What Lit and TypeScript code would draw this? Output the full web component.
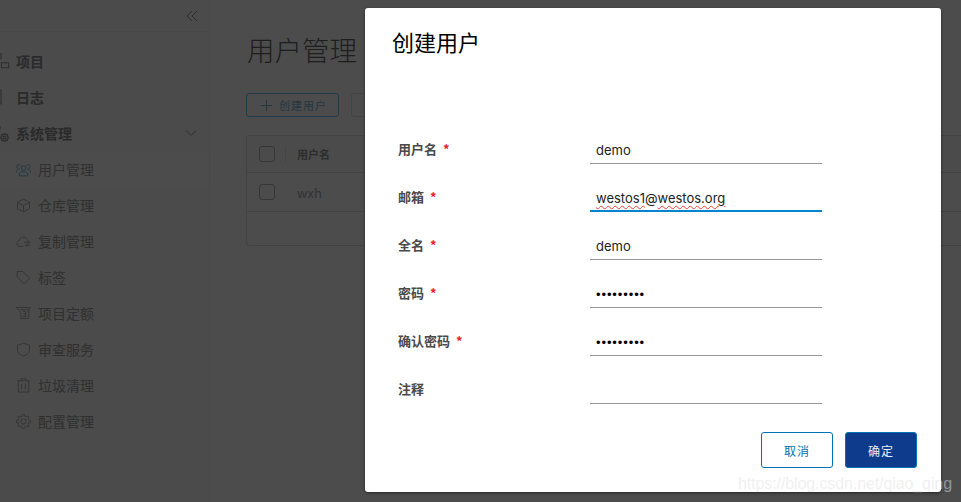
import { LitElement, html, css, svg } from "lit";
import { customElement } from "lit/decorators.js";

function gearPath(cx: number, cy: number, outer: number, inner: number, teeth: number) {
  const pts: string[] = [];
  const step = (Math.PI * 2) / teeth;
  for (let i = 0; i < teeth; i++) {
    const a = i * step - Math.PI / 2;
    const at = (r: number, o: number) =>
      `${(cx + r * Math.cos(a + o * step)).toFixed(2)} ${(cy + r * Math.sin(a + o * step)).toFixed(2)}`;
    pts.push(at(outer, -0.16), at(outer, 0.16), at(inner, 0.3), at(inner, 0.7));
  }
  return `M${pts.join("L")}Z`;
}

const icons: Record<string, unknown> = {
  project: svg`<rect x="3" y="2" width="7" height="5.500"/><rect x="-1" y="12" width="7" height="5.500"/><rect x="10.500" y="12" width="8" height="5.500"/><path d="M6.500 7.500v4.500"/>`,
  log: svg`<rect x="-2" y="2.500" width="12" height="15"/><path d="M1 6h6.500M1 8.500h6.500M1 11h6.500M1 13.500h6.500"/>`,
  system: svg`<circle cx="6" cy="4.500" r="3"/><path d="M1 14v-2c0-2 2-3 5-3"/><path d="${gearPath(14, 15, 4.5, 3.3, 8)}"/><circle cx="14" cy="15" r="1.500"/>`,
  users: svg`<circle cx="10" cy="8" r="3"/><path d="M4.500 18.500v-2.500c0-2 2-3.200 5.500-3.200s5.500 1.200 5.500 3.200v2.500Z"/><path d="M6 5.500a2.500 2.500 0 1 0-2.500 3M14 5.500a2.500 2.500 0 1 1 2.500 3M.8 14v-2c0-1.600 1.500-2.600 4-2.600M19.200 14v-2c0-1.600-1.500-2.600-4-2.600"/>`,
  box: svg`<path d="M10 1.500l8 4.300v8.400L10 18.500l-8-4.300V5.800ZM2 5.800l8 4.300 8-4.300M10 10.100v8.400"/>`,
  cloud: svg`<path d="M9.500 16.500H5a4 4 0 0 1-.6-7.900A5.500 5.500 0 0 1 14.800 7M11 11h7.500M16 8.500l2.500 2.500-2.500 2.500M19 15h-6M15 13l-2 2 2 2"/>`,
  tag: svg`<path d="M1.500 2h7.800l9 9.200-7.200 7.300-9.600-9ZM5.800 6.200h.6"/>`,
  quota: svg`<path d="M.5 2h19l-2.500 3v11.500H6.500V9L.5 2ZM6 5h11M9 7.500h4v6.500H9M10 10.700h3"/>`,
  shield: svg`<path d="M10 1.500l8 2.800v6.500c0 3.700-4 6.300-8 7.900-4-1.600-8-4.200-8-7.900V4.300Z"/>`,
  trash: svg`<path d="M6.500 3.800V1h7v2.800M1.500 3.800h17M3 3.800v15h14v-15M7.500 7.500v8M12.500 7.500v8"/>`,
  cog: svg`<circle cx="10" cy="10" r="3.400"/><path d="${gearPath(10, 10, 9.500, 7.300, 8)}" stroke-linejoin="round"/>`,
};

const icon = (name: string) =>
  html`<svg class="ic" viewBox="0 0 20 20" fill="none" stroke="currentColor" stroke-width="1.200">${icons[name]}</svg>`;

const subItems: [string, string][] = [
  ["users", "用户管理"],
  ["box", "仓库管理"],
  ["cloud", "复制管理"],
  ["tag", "标签"],
  ["quota", "项目定额"],
  ["shield", "审查服务"],
  ["trash", "垃圾清理"],
  ["cog", "配置管理"],
];

const fields: { label: string; value: unknown; req: boolean; focus?: boolean }[] = [
  { label: "用户名", value: "demo", req: true },
  {
    label: "邮箱",
    value: html`<span class="typo">westos1</span>@<span class="typo">westos.org</span>`,
    req: true,
    focus: true,
  },
  { label: "全名", value: "demo", req: true },
  { label: "密码", value: html`<span class="dots">•••••••••</span>`, req: true },
  { label: "确认密码", value: html`<span class="dots">•••••••••</span>`, req: true },
  { label: "注释", value: "", req: false },
];

@customElement("app-root")
export class AppRoot extends LitElement {
  static styles = css`
    :host {
      display: block;
      position: relative;
      width: 961px;
      height: 502px;
      overflow: hidden;
      background: #fff;
      font-family: "Noto Sans CJK SC", "Noto Sans", sans-serif;
      color: #565656;
    }
    .page { display: flex; height: 100%; }
    .side {
      width: 210px;
      flex: none;
      background: #fafafa;
      border-right: 1px solid #f2f2f2;
      box-sizing: border-box;
      display: flex;
      flex-direction: column;
    }
    .collapse {
      height: 32px;
      flex: none;
      box-sizing: border-box;
      border-bottom: 1px solid #eee;
      display: flex;
      justify-content: flex-end;
      align-items: center;
      padding-right: 11px;
      margin-bottom: 11px;
    }
    .chev { width: 12px; height: 12px; display: block; color: #999; }
    .row {
      height: 36px;
      display: flex;
      align-items: center;
      gap: 7px;
      flex: none;
      font-size: 14px;
      color: #a0a0a0;
    }
    .row.top { font-weight: 700; padding-left: 16px; position: relative; color: #8c8c8c; }
    .row.top .ic { position: absolute; left: -8px; width: 18px; height: 18px; color: #9a9a9a; }
    .row.top .down { margin-left: auto; margin-right: 12px; width: 12px; height: 12px; color: #999; }
    .row.sub { padding-left: 16px; }
    .row.sub.active { background: #fff; }
    .row.sub.active .ic { color: #6fb4e0; }
    .ic { width: 15px; height: 15px; flex: none; display: block; color: #a8a8a8; }
    .main { flex: 1; padding: 0 0 0 36px; min-width: 0; display: flex; flex-direction: column; }
    h1 {
      margin: 29px 0 0 1px;
      font-size: 27.5px;
      line-height: 40px;
      font-weight: 300;
      color: #666;
      height: 64px;
    }
    .actions { display: flex; gap: 12px; height: 24px; margin-bottom: 18px; }
    .btn {
      width: 93px;
      box-sizing: border-box;
      border: 1px solid #6fc0f0;
      border-radius: 3px;
      color: #7fb4d4;
      font-size: 11px;
      letter-spacing: 1px;
      display: flex;
      align-items: center;
      padding-left: 14px;
      gap: 7px;
    }
    .btn svg { width: 11px; height: 11px; display: block; }
    .btn.ghost { border-color: #ddd; }
    .grid {
      width: 760px;
      height: 111px;
      border: 1px solid #ddd;
      border-radius: 3px;
      box-sizing: border-box;
      flex: none;
    }
    .gh, .gr { display: flex; align-items: center; padding-left: 12px; box-sizing: border-box; }
    .gh { height: 37px; background: #fafafa; border-bottom: 1px solid #ddd; font-size: 11px; font-weight: 700; color: #999; }
    .gr { height: 39px; border-bottom: 1px solid #ddd; font-size: 13px; color: #aaa; }
    .cb { width: 16px; height: 16px; box-sizing: border-box; border: 1px solid #b4b4b4; border-radius: 3px; flex: none; }
    .sep { width: 1px; height: 16px; background: #e4e4e4; margin: 0 11px 0 10px; }
    .gr .cb { margin-right: 22px; }
    .overlay {
      position: absolute;
      inset: 0;
      background: rgba(0, 0, 0, 0.7);
      padding: 8px 20px 10px 365px;
      box-sizing: border-box;
      display: flex;
    }
    .modal {
      flex: 1;
      background: #fff;
      border-radius: 3px;
      box-shadow: 0 1px 3px rgba(0, 0, 0, 0.5);
      padding: 17px 24px 24px 27px;
      box-sizing: border-box;
      display: flex;
      flex-direction: column;
    }
    h2 {
      margin: 0;
      font-size: 22px;
      font-weight: 400;
      line-height: 32px;
      color: #000;
      height: 74px;
    }
    form { display: flex; flex-direction: column; gap: 0; padding-left: 6px; margin-top: 18px; }
    .f { display: flex; height: 48px; align-items: flex-start; flex: none; }
    .lab {
      width: 192px;
      flex: none;
      font-size: 13px;
      font-weight: 700;
      color: #4a4a4a;
      line-height: 20px;
      padding-top: 23px;
      box-sizing: border-box;
    }
    .star { color: #e8202a; margin-left: 3px; font-size: 13px; font-weight: 700; }
    .val {
      width: 232px;
      height: 48px;
      box-sizing: border-box;
      border-bottom: 1px solid #9a9a9a;
      padding: 22px 6px 0;
      font-family: "Inter", sans-serif;
      font-size: 13px;
      line-height: 24px;
      color: #222;
      white-space: nowrap;
    }
    .val.focus { border-bottom: 2px solid #0284cf; }
    .typo { text-decoration: underline wavy #e8403a 1px; text-underline-offset: 2px; }
    .dots { font-family: "Liberation Sans", sans-serif; font-size: 13px; letter-spacing: 0.9px; color: #000; }
    .foot { display: flex; justify-content: flex-end; gap: 12px; margin-top: 28px; }
    .mb {
      width: 72px;
      height: 36px;
      box-sizing: border-box;
      border: 1px solid #0072b5;
      border-radius: 3px;
      font-size: 12px;
      letter-spacing: 1px;
      color: #0072b5;
      background: #fff;
      display: flex;
      align-items: center;
      justify-content: center;
    }
    .mb.primary { background: #0f3b8c; color: #e8eef8; }
    .mark {
      position: absolute;
      left: 738px;
      top: 474px;
      font-family: "Liberation Sans", sans-serif;
      font-size: 16px;
      line-height: 20px;
      letter-spacing: -0.1px;
      color: rgba(225, 225, 225, 0.5);
      white-space: nowrap;
    }
  `;

  render() {
    return html`
      <div class="page">
        <aside class="side">
          <div class="collapse">
            <svg class="chev" viewBox="0 0 12 12" fill="none" stroke="currentColor"><path d="M6 1 1 6l5 5M11 1 6 6l5 5"/></svg>
          </div>
          <div class="row top">${icon("project")}项目</div>
          <div class="row top">${icon("log")}日志</div>
          <div class="row top">
            ${icon("system")}系统管理
            <svg class="down" viewBox="0 0 12 12" fill="none" stroke="currentColor"><path d="M1 3.500l5 5 5-5"/></svg>
          </div>
          ${subItems.map(
            ([i, t], n) => html`<div class="row sub ${n === 0 ? "active" : ""}">${icon(i)}${t}</div>`
          )}
        </aside>
        <main class="main">
          <h1>用户管理</h1>
          <div class="actions">
            <div class="btn">
              <svg viewBox="0 0 11 11" fill="none" stroke="currentColor"><path d="M5.500 0v11M0 5.500h11"/></svg>
              创建用户
            </div>
            <div class="btn ghost"></div>
          </div>
          <div class="grid">
            <div class="gh"><span class="cb"></span><span class="sep"></span>用户名</div>
            <div class="gr"><span class="cb"></span>wxh</div>
          </div>
        </main>
      </div>
      <div class="overlay">
        <section class="modal">
          <h2>创建用户</h2>
          <form>
            ${fields.map(
              (f) => html`<div class="f">
                <div class="lab">${f.label}${f.req ? html` <span class="star">*</span>` : ""}</div>
                <div class="val ${f.focus ? "focus" : ""}">${f.value}</div>
              </div>`
            )}
          </form>
          <div class="foot">
            <div class="mb">取消</div>
            <div class="mb primary">确定</div>
          </div>
        </section>
      </div>
      <div class="mark">https://blog.csdn.net/qiao_qing</div>
    `;
  }
}
